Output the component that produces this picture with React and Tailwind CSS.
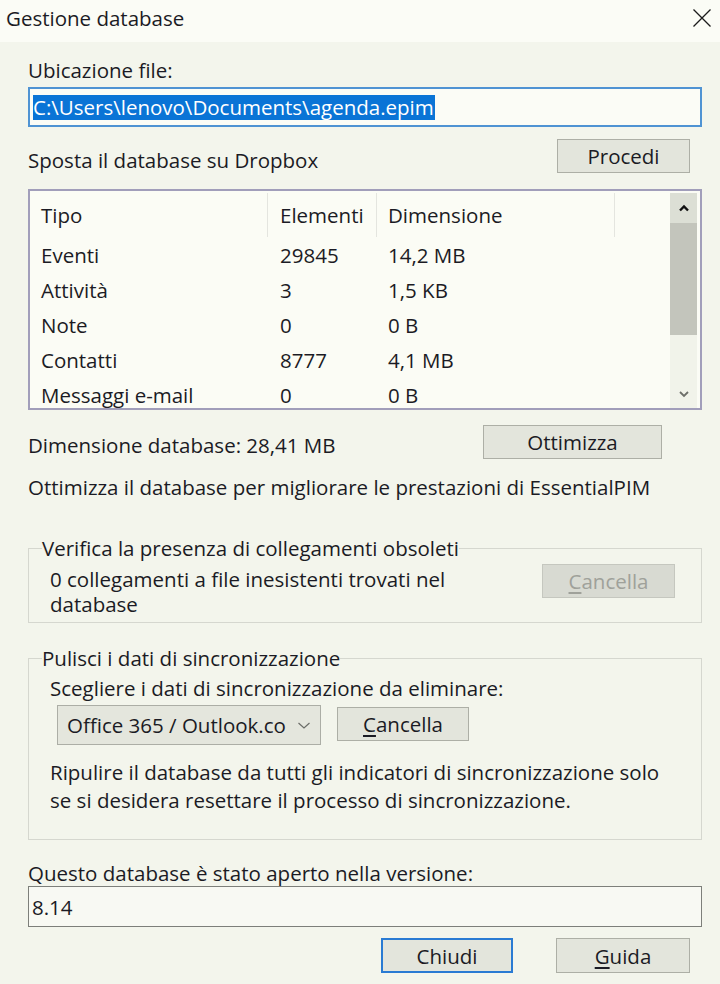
import React from "react";

function Btn({ children, className }) {
  return (
    <div className={"flex items-center justify-center " + className}>
      {children}
    </div>
  );
}

const rows = [
  ["Eventi", "29845", "14,2 MB"],
  ["Attività", "3", "1,5 KB"],
  ["Note", "0", "0 B"],
  ["Contatti", "8777", "4,1 MB"],
  ["Messaggi e-mail", "0", "0 B"],
];

export default function App() {
  return (
    <div className="w-[720px] h-[984px] bg-[#f3f5ec] text-[#1b1b24] font-['Open_Sans',sans-serif] text-[20.5px] leading-[24px] flex flex-col overflow-hidden">
      {/* title bar */}
      <div className="h-[42px] shrink-0 bg-[#fbfcf6] flex items-start justify-between pl-[6px] pr-[8px] pt-[6px]">
        <span>Gestione database</span>
        <svg width="20" height="20" viewBox="0 0 20 20" className="mt-[2px]">
          <path d="M1.5 1.5 L18.5 18.5 M18.5 1.5 L1.5 18.5" stroke="#1b1b1b" strokeWidth="1.3" fill="none" />
        </svg>
      </div>

      <div className="flex flex-col pl-[28px] pr-[18px] pt-[16px]">
        <div>Ubicazione file:</div>
        <div className="mt-[5px] h-[40px] border-2 border-[#4f93d3] bg-[#fbfcf6] flex items-center pl-[3px]">
          <span className="bg-[#0a74d6] text-white h-[25px] leading-[25px] pr-[1px]">
            {"C:\\Users\\lenovo\\Documents\\agenda.epim"}
          </span>
        </div>

        <div className="mt-[12px] flex items-end justify-between pr-[12px]">
          <span className="mb-[1px]">Sposta il database su Dropbox</span>
          <Btn className="w-[133px] h-[34px] bg-[#e3e5dc] border border-[#adafa6]">Procedi</Btn>
        </div>

        {/* list */}
        <div className="mt-[16px] h-[221px] border-2 border-[#a19eba] bg-[#fbfcf5] flex pt-[2px] pr-[3px] overflow-hidden">
          <div className="flex-1 flex flex-col overflow-hidden">
            <div className="grid grid-cols-[238px_109px_238px_1fr] h-[44px] shrink-0">
              <div className="pl-[11px] flex items-center border-r border-[#e4e5df]">Tipo</div>
              <div className="pl-[12px] flex items-center border-r border-[#e4e5df]">Elementi</div>
              <div className="pl-[11px] flex items-center border-r border-[#e4e5df]">Dimensione</div>
              <div></div>
            </div>
            {rows.map((r) => (
              <div key={r[0]} className="grid grid-cols-[238px_109px_238px_1fr] h-[35px] shrink-0 items-center">
                <div className="pl-[11px]">{r[0]}</div>
                <div className="pl-[12px]">{r[1]}</div>
                <div className="pl-[11px]">{r[2]}</div>
                <div></div>
              </div>
            ))}
          </div>
          <div className="w-[27px] flex flex-col">
            <div className="h-[30px] bg-[#dcdfd5] flex items-center justify-center">
              <svg width="10" height="8" viewBox="0 0 10 8">
                <path d="M1 6.5 L5 2.5 L9 6.5" stroke="#111" strokeWidth="2.4" fill="none" />
              </svg>
            </div>
            <div className="h-[112px] bg-[#c3c5bc]"></div>
            <div className="flex-1 bg-[#f1f3ea] flex items-end justify-center pb-[10px]">
              <svg width="10" height="8" viewBox="0 0 10 8">
                <path d="M1 2 L5 6 L9 2" stroke="#6d6f6a" strokeWidth="1.8" fill="none" />
              </svg>
            </div>
          </div>
        </div>

        <div className="mt-[15px] flex justify-between items-center pr-[40px]">
          <span className="mt-[6px]">Dimensione database: 28,41 MB</span>
          <Btn className="w-[179px] h-[34px] bg-[#e3e5dc] border border-[#adafa6]">Ottimizza</Btn>
        </div>

        <div className="mt-[16px]">Ottimizza il database per migliorare le prestazioni di EssentialPIM</div>

        <fieldset className="mt-[37px] border border-[#d5d7cf]">
          <legend className="ml-[13px]">Verifica la presenza di collegamenti obsoleti</legend>
          <div className="flex justify-between pl-[21px] pr-[26px] pt-[4px] pb-[5px]">
            <div className="mt-[3px] leading-[25px]">
              0 collegamenti a file inesistenti trovati nel
              <br />
              database
            </div>
            <Btn className="w-[133px] h-[34px] bg-[#d8dad2] border border-[#c5c7bf] text-[#9fa19a]">
              <span><span className="underline underline-offset-[3px]">C</span>ancella</span>
            </Btn>
          </div>
        </fieldset>

        <fieldset className="mt-[23px] border border-[#d5d7cf]">
          <legend className="ml-[13px]">Pulisci i dati di sincronizzazione</legend>
          <div className="flex flex-col pl-[21px] pr-[20px] pt-[6px] pb-[25px]">
            <div>Scegliere i dati di sincronizzazione da eliminare:</div>
            <div className="mt-[5px] flex items-start">
              <div className="ml-[7px] w-[264px] h-[40px] bg-[#e4e6dd] border border-[#acaea6] flex items-center pl-[9px] pr-[9px] overflow-hidden">
                <span className="w-[219px] whitespace-nowrap overflow-hidden">Office 365 / Outlook.com</span>
                <svg width="14" height="9" viewBox="0 0 14 9" className="ml-auto shrink-0">
                  <path d="M1.5 2 L7 7 L12.5 2" stroke="#6b6d68" strokeWidth="1.2" fill="none" />
                </svg>
              </div>
              <Btn className="ml-[16px] mt-[2px] w-[132px] h-[34px] bg-[#e3e5dc] border border-[#adafa6]">
                <span><span className="underline underline-offset-[3px]">C</span>ancella</span>
              </Btn>
            </div>
            <div className="mt-[13px] leading-[28px]">
              Ripulire il database da tutti gli indicatori di sincronizzazione solo
              <br />
              se si desidera resettare il processo di sincronizzazione.
            </div>
          </div>
        </fieldset>

        <div className="mt-[21px]">Questo database è stato aperto nella versione:</div>
        <div className="mt-[1px] h-[41px] border border-[#7d7f7a] bg-[#f8f9f3] flex items-center pl-[3px]">8.14</div>

        <div className="mt-[11px] flex justify-end gap-[43px] pr-[12px]">
          <Btn className="w-[132px] h-[35px] bg-[#e3e5dc] border-2 border-[#2a7bd3]">Chiudi</Btn>
          <Btn className="w-[134px] h-[35px] bg-[#e3e5dc] border border-[#adafa6]">
            <span><span className="underline underline-offset-[3px]">G</span>uida</span>
          </Btn>
        </div>
      </div>
    </div>
  );
}
